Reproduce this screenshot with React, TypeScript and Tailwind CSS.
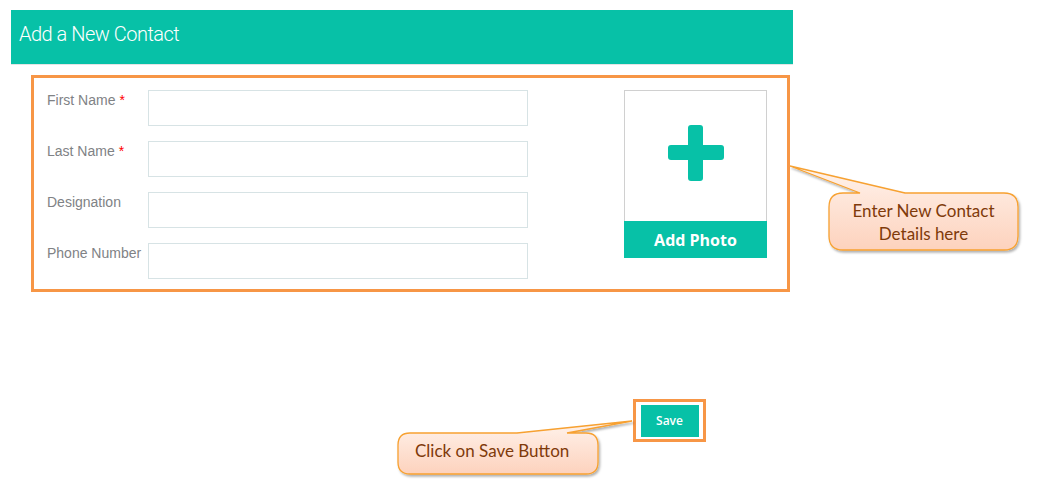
import React from "react";

const rows = [
  { label: "First Name", req: true },
  { label: "Last Name", req: true },
  { label: "Designation", req: false },
  { label: "Phone Number", req: false },
];

function Callouts() {
  return (
    <svg className="absolute inset-0 pointer-events-none" width="1038" height="493" viewBox="0 0 1038 493">
      <defs>
        <linearGradient id="cg" x1="0" y1="0" x2="0" y2="1">
          <stop offset="0" stopColor="#fff3ec" />
          <stop offset="1" stopColor="#fdd2bd" />
        </linearGradient>
        <filter id="sh" x="-10%" y="-20%" width="130%" height="150%">
          <feDropShadow dx="1.5" dy="2" stdDeviation="1.2" floodColor="#000" floodOpacity="0.3" />
        </filter>
      </defs>
      <path
        d="M 843 193 L 860 193 L 790 166 L 905 193 L 1004 193 Q 1018 193 1018 207 L 1018 236 Q 1018 250 1004 250 L 843 250 Q 829 250 829 236 L 829 207 Q 829 193 843 193 Z"
        fill="url(#cg)"
        stroke="#f7a130"
        strokeWidth="1.3"
        filter="url(#sh)"
      />
      <path
        d="M 410 433 L 517 433 L 632 421 L 567 433 L 586 433 Q 598 433 598 445 L 598 462 Q 598 474 586 474 L 410 474 Q 398 474 398 462 L 398 445 Q 398 433 410 433 Z"
        fill="url(#cg)"
        stroke="#f7a130"
        strokeWidth="1.3"
        filter="url(#sh)"
      />
    </svg>
  );
}

export default function App() {
  return (
    <div className="relative w-[1038px] h-[493px] bg-white overflow-hidden pt-[10px]" style={{ fontFamily: "Arial" }}>
      <div className="ml-[11px] w-[782px] h-[55px] bg-[#07c1a7] border-b border-[#e4e4e4] flex items-center pl-[8px] pb-[7px]">
        <span className="text-white text-[20px] font-light tracking-[-0.5px] [font-family:Roboto,sans-serif]">Add a New Contact</span>
      </div>

      <div className="mt-[10px] ml-[31px] w-[759px] h-[217px] border-[3px] border-[#f79646] flex justify-between pt-[12px] pl-[13px] pr-[20px] [font-family:'Liberation_Sans',Arial,sans-serif]">
        <div className="flex flex-col gap-[15px]">
          {rows.map((r) => (
            <div key={r.label} className="flex">
              <div className="w-[101px] text-[14px] leading-[20px] text-[#808285]">
                {r.label}
                {r.req && <span className="text-[#ff0000] ml-[4px]">*</span>}
              </div>
              <div className="w-[380px] h-[36px] border border-[#d7e3e5] bg-white" />
            </div>
          ))}
        </div>
        <div className="w-[143px] h-[168px] flex flex-col">
          <div className="flex-1 border border-b-0 border-[#d0d0d0] flex items-center justify-center pb-[6px]">
            <svg width="56" height="56" viewBox="0 0 56 56">
              <rect x="20" y="0" width="15" height="56" rx="3" fill="#07c1a7" />
              <rect x="0" y="20" width="56" height="15" rx="3" fill="#07c1a7" />
            </svg>
          </div>
          <div className="h-[37px] bg-[#07c1a7] flex items-center justify-center text-white text-[16px] font-bold [font-family:'Open_Sans',sans-serif]">
            Add Photo
          </div>
        </div>
      </div>

      <div className="mt-[107px] ml-[633px] w-[73px] h-[43px] border-[3px] border-[#f79646] flex items-center justify-center">
        <div className="w-[58px] h-[32px] bg-[#07c1a7] flex items-center justify-center text-white text-[12px] font-semibold [font-family:'Open_Sans',sans-serif]">
          Save
        </div>
      </div>

      <Callouts />

      <div className="absolute left-[829px] top-[199px] w-[189px] text-center text-[17px] leading-[23px] text-[#7f3a0a] [font-family:Lato,sans-serif]">
        Enter New Contact
        <br />
        Details here
      </div>
      <div className="absolute left-[415px] top-[439px] text-[17px] leading-[23px] text-[#7f3a0a] [font-family:Lato,sans-serif]">
        Click on Save Button
      </div>
    </div>
  );
}
